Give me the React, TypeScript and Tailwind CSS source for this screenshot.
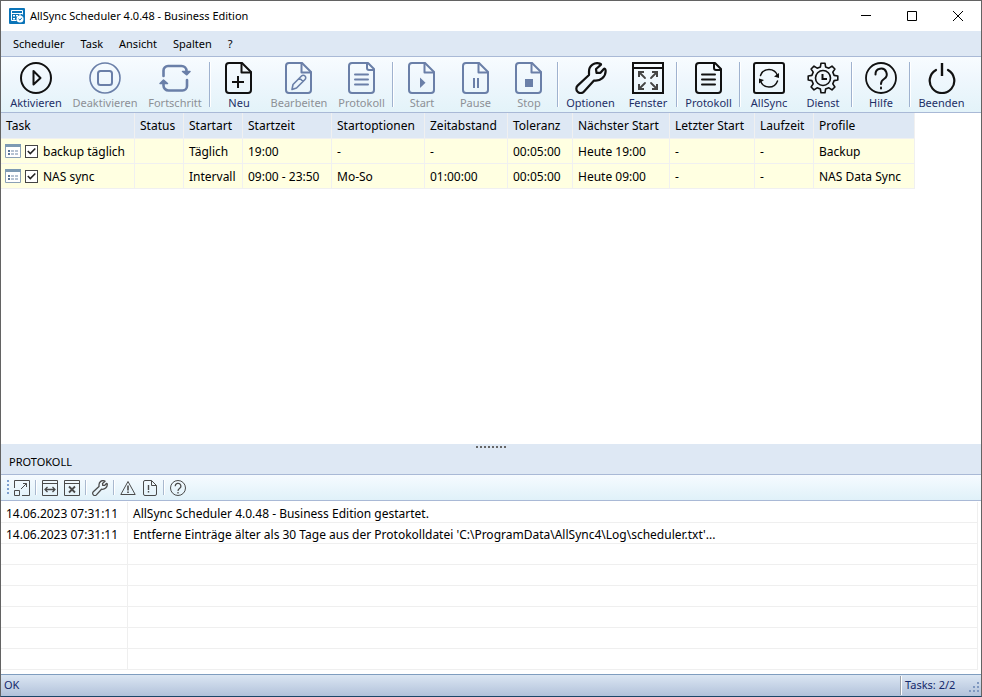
import { useState } from 'react';
import type { ReactNode } from 'react';

type ToolItem = {
  label: string;
  icon: ReactNode;
  width: string;
  disabled?: boolean;
};

type Task = {
  name: string;
  cells: string[];
};

function Icon({ children }: { children: ReactNode }) {
  return (
    <svg
      width="32"
      height="32"
      viewBox="0 0 32 32"
      fill="none"
      stroke="currentColor"
      strokeWidth={2}
      strokeLinecap="round"
      strokeLinejoin="round"
      aria-hidden="true"
    >
      {children}
    </svg>
  );
}

function DocShape() {
  return (
    <>
      <path d="M6 1H19L28 10V28A3 3 0 0 1 25 31H6A3 3 0 0 1 3 28V4A3 3 0 0 1 6 1Z" />
      <path d="M18.5 1V10.5H28" />
    </>
  );
}

const WRENCH =
  'M25 1.6A8.300 8.300 0 0 0 14 9.500V13L2.600 23.600A4.300 4.300 0 0 0 8.800 29.800L19 18.500C25.500 19.500 31 14.500 30.600 8.500C30.500 7 29.500 6.300 28.800 7L25.500 10.800L21.500 10.800L21 7L25.500 3.200C26.400 2.400 26 1.700 25 1.600Z';

const PlayCircle = (
  <Icon>
    <circle cx="16" cy="16" r="15" />
    <path d="M13.500 9V22.500L20.500 16Z" />
  </Icon>
);

const StopCircle = (
  <Icon>
    <circle cx="16" cy="16" r="15" strokeWidth={1.600} />
    <rect x="9" y="9" width="14" height="14" rx="2.500" />
  </Icon>
);

const Loop = (
  <Icon>
    <g strokeWidth={2.600}>
      <path d="M4.500 14V8.500A4.500 4.500 0 0 1 9 4H22.500A5 5 0 0 1 27.500 9V11" />
      <path d="M23.500 9.500L27.800 12.800L31 9.500Z" fill="currentColor" strokeWidth={1.500} />
      <path d="M28 18V24A4.500 4.500 0 0 1 23.500 28.500H9.500A5 5 0 0 1 4.500 23.500V20" />
      <path d="M1 21.500L4.500 18L8.500 21.500Z" fill="currentColor" strokeWidth={1.500} />
    </g>
  </Icon>
);

const NewDoc = (
  <Icon>
    <DocShape />
    <path d="M15 14V26M9 20H21" strokeLinecap="butt" />
  </Icon>
);

const EditDoc = (
  <Icon>
    <DocShape />
    <path d="M9 27.500L10 22.500L18.500 14A2.400 2.400 0 0 1 22 17.500L13.500 26L9 27.500ZM16.500 16L20 19.500" strokeWidth={1.600} />
  </Icon>
);

const TextDoc = (
  <Icon>
    <path d="M6 1H22L28 7V28A3 3 0 0 1 25 31H6A3 3 0 0 1 3 28V4A3 3 0 0 1 6 1Z" />
    <path d="M21 1.500V6A2 2 0 0 0 23 8H28" />
    <path d="M9 12.500H22M9 17.500H22M9 22.500H22" />
  </Icon>
);

const StartDoc = (
  <Icon>
    <DocShape />
    <path d="M14 15.500V26L19.500 20.700Z" fill="currentColor" stroke="none" />
  </Icon>
);

const PauseDoc = (
  <Icon>
    <DocShape />
    <path d="M14 16V26M18 16V26" strokeLinecap="butt" />
  </Icon>
);

const StopDoc = (
  <Icon>
    <DocShape />
    <path d="M12 17H20V25H12Z" fill="currentColor" stroke="none" />
  </Icon>
);

const Wrench = (
  <Icon>
    <path d={WRENCH} strokeWidth={2.200} />
  </Icon>
);

const FullWindow = (
  <Icon>
    <path d="M1 1H31V31H1ZM1 6H31" strokeLinejoin="miter" />
    <g stroke="#444">
      <path d="M8 11L13 16M24 11L19 16M8 26L13 21M24 26L19 21" strokeWidth={1.800} />
      <path d="M7 15V10H12M20 10H25V15M7 22V27H12M20 27H25V22" strokeWidth={2} strokeLinejoin="miter" strokeLinecap="butt" />
    </g>
  </Icon>
);

const SyncBox = (
  <Icon>
    <rect x="1" y="1" width="30" height="30" rx="2" />
    <path d="M7.500 13.500A9 9 0 0 1 24.500 13.500M24.500 19A9 9 0 0 1 7.500 19" strokeWidth={1.500} />
    <path d="M26 11V16L21 14.500ZM6 21.500V16.500L11 18Z" fill="currentColor" stroke="none" />
  </Icon>
);

const GEAR =
  'M13.400 4.900L14 1.200H18L18.600 4.900L21.900 6.200L25 4.100L27.900 7L25.800 10.100L27.100 13.400L30.800 14V18L27.100 18.600L25.800 21.900L27.900 25L25 27.900L21.900 25.800L18.600 27.100L18 30.800H14L13.400 27.100L10.100 25.800L7 27.900L4.100 25L6.200 21.900L4.900 18.600L1.200 18V14L4.900 13.400L6.200 10.100L4.100 7L7 4.100L10.100 6.200Z';

const GearClock = (
  <Icon>
    <path d={GEAR} strokeWidth={1.600} />
    <circle cx="16" cy="16" r="7.500" strokeWidth={1.600} />
    <path d="M15.500 12V17H20" strokeLinecap="butt" strokeLinejoin="miter" />
  </Icon>
);

const QUESTION = 'M10.500 12.500A5.600 5.600 0 1 1 19 17C17 18.300 16 19.200 16 22';

const Help = (
  <Icon>
    <circle cx="16" cy="16" r="15" strokeWidth={1.800} />
    <path d={QUESTION} />
    <path d="M16 25.500V26.500" />
  </Icon>
);

const Power = (
  <Icon>
    <path d="M10 8A12.300 12.300 0 1 0 22 8" strokeWidth={2.200} />
    <path d="M16 1V14" strokeWidth={2.400} strokeLinecap="butt" />
  </Icon>
);

const toolGroups: ToolItem[][] = [
  [
    { label: 'Aktivieren', icon: PlayCircle, width: 'w-16' },
    { label: 'Deaktivieren', icon: StopCircle, width: 'w-[74px]', disabled: true },
    { label: 'Fortschritt', icon: Loop, width: 'w-[66px]', disabled: true },
  ],
  [
    { label: 'Neu', icon: NewDoc, width: 'w-[54px]' },
    { label: 'Bearbeiten', icon: EditDoc, width: 'w-[66px]', disabled: true },
    { label: 'Protokoll', icon: TextDoc, width: 'w-[59px]', disabled: true },
  ],
  [
    { label: 'Start', icon: StartDoc, width: 'w-[54px]', disabled: true },
    { label: 'Pause', icon: PauseDoc, width: 'w-[53px]', disabled: true },
    { label: 'Stop', icon: StopDoc, width: 'w-[54px]', disabled: true },
  ],
  [
    { label: 'Optionen', icon: Wrench, width: 'w-[61px]' },
    { label: 'Fenster', icon: FullWindow, width: 'w-[54px]' },
  ],
  [{ label: 'Protokoll', icon: TextDoc, width: 'w-[59px]' }],
  [
    { label: 'AllSync', icon: SyncBox, width: 'w-[54px]' },
    { label: 'Dienst', icon: GearClock, width: 'w-[54px]' },
  ],
  [{ label: 'Hilfe', icon: Help, width: 'w-[54px]' }],
  [{ label: 'Beenden', icon: Power, width: 'w-[59px]' }],
];

const menu = ['Scheduler', 'Task', 'Ansicht', 'Spalten', '?'];

const columns = [
  { title: 'Task', width: 'w-[134px]' },
  { title: 'Status', width: 'w-[49px]' },
  { title: 'Startart', width: 'w-[59px]' },
  { title: 'Startzeit', width: 'w-[89px]' },
  { title: 'Startoptionen', width: 'w-[93px]' },
  { title: 'Zeitabstand', width: 'w-[83px]' },
  { title: 'Toleranz', width: 'w-[65px]' },
  { title: 'Nächster Start', width: 'w-[97px]' },
  { title: 'Letzter Start', width: 'w-[85px]' },
  { title: 'Laufzeit', width: 'w-[59px]' },
  { title: 'Profile', width: 'w-[101px]' },
];

const tasks: Task[] = [
  {
    name: 'backup täglich',
    cells: ['', 'Täglich', '19:00', '-', '-', '00:05:00', 'Heute 19:00', '-', '-', 'Backup'],
  },
  {
    name: 'NAS sync',
    cells: ['', 'Intervall', '09:00 - 23:50', 'Mo-So', '01:00:00', '00:05:00', 'Heute 09:00', '-', '-', 'NAS Data Sync'],
  },
];

const log = [
  { time: '14.06.2023 07:31:11', text: 'AllSync Scheduler 4.0.48 - Business Edition gestartet.' },
  {
    time: '14.06.2023 07:31:11',
    text: "Entferne Einträge älter als 30 Tage aus der Protokolldatei 'C:\\ProgramData\\AllSync4\\Log\\scheduler.txt'...",
  },
];

function TitleBar() {
  return (
    <header className="flex h-[30px] shrink-0 items-center bg-white pl-2">
      <svg width="16" height="16" viewBox="0 0 16 16" aria-hidden="true">
        <rect width="16" height="16" rx="1" fill="#0b74b8" />
        <path d="M7.500 12.500H2.500V2.500H13.500V6.500M2.500 5.500H13.500" fill="none" stroke="#fff" />
        <path d="M4 7H6V8.500H4ZM7 7H9V8.500H7ZM10 6.500H12V7.500H10ZM4 10H6V11.500H4Z" fill="#fff" />
        <circle cx="11" cy="11" r="3.500" fill="#fff" />
        <path d="M9.500 10.800L11 12.200L12.800 9.800" fill="none" stroke="#0b74b8" />
      </svg>
      <h1 className="ml-[5px] text-[11px]">AllSync Scheduler 4.0.48 - Business Edition</h1>
      <div className="ml-auto flex">
        <button aria-label="Minimieren" className="flex h-[30px] w-[46px] items-center justify-center">
          <svg width="10" height="10" stroke="#000" fill="none"><path d="M0 4.500H10" /></svg>
        </button>
        <button aria-label="Maximieren" className="flex h-[30px] w-[46px] items-center justify-center">
          <svg width="10" height="10" stroke="#000" fill="none"><path d="M.5.5H9.500V9.500H.5Z" /></svg>
        </button>
        <button aria-label="Schließen" className="flex h-[30px] w-[46px] items-center justify-center">
          <svg width="10" height="10" stroke="#000" fill="none"><path d="M0 0L10 10M10 0L0 10" /></svg>
        </button>
      </div>
    </header>
  );
}

function MainToolbar() {
  return (
    <div className="flex h-[57px] shrink-0 border-y border-[#a9b9d6] bg-linear-to-b from-[#f8fcff] from-0% via-[#eff7fd] via-40% to-[#e3f3f9] pl-[3px]">
      {toolGroups.map((group, i) => (
        <div key={i} className="flex">
          {i > 0 && (
            <div className="flex w-1 py-[5px] pl-px">
              <div className="w-[2px] border-r border-l border-r-white border-l-[#9fb2cf]" />
            </div>
          )}
          {group.map((item) => (
            <button
              key={item.label}
              disabled={item.disabled}
              className={`${item.width} flex flex-col items-center pt-[5px] text-[11px] leading-[18px] whitespace-nowrap`}
            >
              <span className={item.disabled ? 'text-[#6a7fa8]' : 'text-[#111]'}>{item.icon}</span>
              <span className={item.disabled ? 'text-[#8d9096]' : 'text-[#1e2f66]'}>{item.label}</span>
            </button>
          ))}
        </div>
      ))}
    </div>
  );
}

function TaskRow({ task }: { task: Task }) {
  const [active, setActive] = useState(true);

  return (
    <tr className="h-[25px] bg-[#ffffe1]">
      <td className="border-r border-b border-[#f0f0f0]">
        <label className="flex items-center pl-1">
          <svg width="16" height="14" viewBox="0 0 16 14" aria-hidden="true">
            <path d="M.5.5H15.500V13.500H.5Z" fill="#fff" stroke="#8ba0b5" />
            <path d="M0 0H16V3H0Z" fill="#7d9ab3" />
            <path d="M3 6H5V8H3ZM3 9H5V11H3Z" fill="#5b7696" />
            <path d="M6 7H9M10 7H13M6 10H9M10 10H13" stroke="#6f87a5" />
          </svg>
          <span className="relative ml-1 flex">
            <input
              type="checkbox"
              checked={active}
              onChange={(e) => setActive(e.target.checked)}
              className="size-[13px] appearance-none border border-[#444] bg-white"
            />
            {active && (
              <svg width="13" height="13" className="pointer-events-none absolute" fill="none" stroke="#222" strokeWidth={1.600}>
                <path d="M2.800 6L5.300 8.500L10.300 3.500" />
              </svg>
            )}
          </span>
          <span className="ml-[5px] pt-[2px]">{task.name}</span>
        </label>
      </td>
      {task.cells.map((cell, i) => (
        <td key={i} className="border-r border-b border-[#f0f0f0] pt-[2px] pl-[5px]">{cell}</td>
      ))}
    </tr>
  );
}

function TaskTable() {
  return (
    <table className="table-fixed border-separate border-spacing-0 text-xs whitespace-nowrap">
      <thead>
        <tr className="h-[26px] bg-[#dee8f4]">
          {columns.map((col) => (
            <th key={col.title} className={`${col.width} border-r border-b border-[#f0f0f0] pl-[5px] text-left font-normal`}>
              {col.title}
            </th>
          ))}
        </tr>
      </thead>
      <tbody>
        {tasks.map((task) => (
          <TaskRow key={task.name} task={task} />
        ))}
      </tbody>
    </table>
  );
}

function SmallButton({ label, children }: { label: string; children: ReactNode }) {
  return (
    <button aria-label={label} title={label} className="flex w-[22px] items-center justify-center text-[#4a4a4a]">
      <svg width="16" height="16" viewBox="0 0 16 16" fill="none" stroke="currentColor" aria-hidden="true">
        {children}
      </svg>
    </button>
  );
}

function SmallSeparator() {
  return <div className="mx-[2px] my-[5px] w-[2px] border-r border-l border-r-white border-l-[#a9b9cf]" />;
}

function LogToolbar() {
  return (
    <div className="flex h-[27px] shrink-0 border-y border-[#a9b9d6] bg-linear-to-b from-[#f6fbff] to-[#e0f1f9] pl-[6px]">
      <svg width="4" height="25" fill="#7da0cf" aria-hidden="true">
        <path d="M0 5H2V7H0ZM0 9H2V11H0ZM0 13H2V15H0ZM0 17H2V19H0Z" />
      </svg>
      <SmallButton label="Vergrößern">
        <path d="M.5 8V.5H15.500V15.500H8M.5 10.500H5.500V15.500H.5Z" />
        <path d="M7 9L12.500 3.500M9 3.500H12.500V7" />
      </SmallButton>
      <SmallSeparator />
      <SmallButton label="Spaltenbreite">
        <path d="M.5.5H15.500V15.500H.5ZM.5 3.500H15.500" />
        <path d="M3 9.500H13M5.500 7L3 9.500L5.500 12M10.500 7L13 9.500L10.500 12" strokeWidth={1.300} />
      </SmallButton>
      <SmallButton label="Leeren">
        <path d="M.5.5H15.500V15.500H.5ZM.5 3.500H15.500" />
        <path d="M5 6.500L11 12.500M11 6.500L5 12.500" strokeWidth={1.800} />
      </SmallButton>
      <SmallSeparator />
      <SmallButton label="Optionen">
        <path d={WRENCH} transform="scale(.5)" strokeWidth={2.600} strokeLinejoin="round" />
      </SmallButton>
      <SmallSeparator />
      <SmallButton label="Warnungen">
        <path d="M8 1.500L15.200 14.500H.8Z" strokeLinejoin="round" />
        <path d="M8 5.500V10.500M8 11.500V13" strokeWidth={1.600} />
      </SmallButton>
      <SmallButton label="Protokolldatei">
        <path d="M3 .5H9.500L14.500 5.500V14A1.500 1.500 0 0 1 13 15.500H3A1.500 1.500 0 0 1 1.500 14V2A1.500 1.500 0 0 1 3 .5ZM9.500.5V5.500H14.500" />
        <path d="M6.500 5V10M6.500 11V12.500" strokeWidth={1.400} />
      </SmallButton>
      <SmallSeparator />
      <SmallButton label="Hilfe">
        <circle cx="8" cy="8" r="7.500" />
        <path d={QUESTION} transform="scale(.5)" strokeWidth={2.400} />
        <path d="M8 12V13.500" strokeWidth={1.300} />
      </SmallButton>
    </div>
  );
}

function LogPanel() {
  const emptyRows = Array.from({ length: 6 });
  const cell = 'border-r border-b border-[#efefef] pt-[3px] pl-[5px]';

  return (
    <section className="flex h-[230px] shrink-0 flex-col">
      <div className="flex h-[30px] shrink-0 flex-col bg-[#dee8f4]">
        <svg width="30" height="4" fill="#666" className="mx-auto shrink-0" aria-hidden="true">
          <path d="M0 2H2V4H0ZM4 2H6V4H4ZM8 2H10V4H8ZM12 2H14V4H12ZM16 2H18V4H16ZM20 2H22V4H20ZM24 2H26V4H24ZM28 2H30V4H28Z" />
        </svg>
        <h2 className="pt-[6px] pl-2 text-[11px] leading-4">PROTOKOLL</h2>
      </div>
      <LogToolbar />
      <div className="min-h-0 flex-1 overflow-hidden bg-white pt-px pr-[3px]">
        <table className="w-full table-fixed border-separate border-spacing-0 text-xs whitespace-nowrap">
          <colgroup>
            <col className="w-[127px]" />
            <col />
          </colgroup>
          <tbody>
            {log.map((entry, i) => (
              <tr key={i} className="h-[21px]">
                <td className={cell}>{entry.time}</td>
                <td className={cell}>{entry.text}</td>
              </tr>
            ))}
            {emptyRows.map((_, i) => (
              <tr key={i} className="h-[21px]">
                <td className={cell} />
                <td className={cell} />
              </tr>
            ))}
          </tbody>
        </table>
      </div>
    </section>
  );
}

function StatusBar() {
  return (
    <footer className="flex h-[22px] shrink-0 border-t border-[#7f9dbf] bg-linear-to-b from-[#dbe6f3] to-[#b2c2da] text-[11px] text-[#14286b]">
      <span className="flex flex-1 items-center pl-[3px]">OK</span>
      <div className="my-px w-[2px] border-r border-l border-r-white border-l-[#9aa0a8]" />
      <span className="flex w-[79px] items-center justify-between pl-[3px]">
        Tasks: 2/2
        <svg width="12" height="14" fill="#7f98c0" className="self-end" aria-hidden="true">
          <path d="M8 0H10V2H8ZM8 4H10V6H8ZM8 8H10V10H8ZM4 4H6V6H4ZM4 8H6V10H4ZM0 8H2V10H0Z" />
        </svg>
      </span>
    </footer>
  );
}

export default function App() {
  return (
    <div className="flex h-screen flex-col overflow-hidden border border-[#636363] border-b-[#1c4668] bg-white font-['Noto_Sans','Open_Sans',sans-serif] text-black">
      <TitleBar />
      <nav className="flex h-[25px] shrink-0 items-center gap-4 bg-[#dee8f4] pt-px pl-3 text-[11px]">
        {menu.map((item) => (
          <button key={item}>{item}</button>
        ))}
      </nav>
      <MainToolbar />
      <main className="min-h-0 flex-1 overflow-auto">
        <TaskTable />
      </main>
      <LogPanel />
      <StatusBar />
    </div>
  );
}
